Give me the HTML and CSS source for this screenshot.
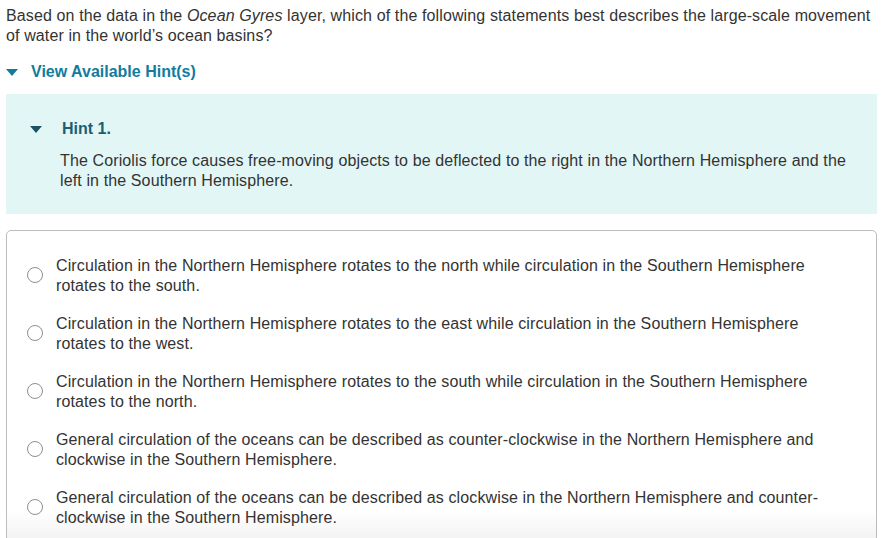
FILE: index.html
```html
<!DOCTYPE html>
<html>
<head>
<meta charset="utf-8">
<link rel="stylesheet" href="styles.css">
</head>
<body>
<p class="question">Based on the data in the <em>Ocean Gyres</em> layer, which of the following statements best describes the large-scale movement of water in the world’s ocean basins?</p>
<div class="hints-toggle"><span class="tri tri-link"></span><span>View Available Hint(s)</span></div>
<div class="hint-box">
  <div class="hint-title"><span class="tri tri-hint"></span><span>Hint 1.</span></div>
  <p class="hint-text">The Coriolis force causes free-moving objects to be deflected to the right in the Northern Hemisphere and the left in the Southern Hemisphere.</p>
</div>
<div class="options">
  <label class="option"><span class="radio"></span><span class="opt-text">Circulation in the Northern Hemisphere rotates to the north while circulation in the Southern Hemisphere rotates to the south.</span></label>
  <label class="option"><span class="radio"></span><span class="opt-text">Circulation in the Northern Hemisphere rotates to the east while circulation in the Southern Hemisphere rotates to the west.</span></label>
  <label class="option"><span class="radio"></span><span class="opt-text">Circulation in the Northern Hemisphere rotates to the south while circulation in the Southern Hemisphere rotates to the north.</span></label>
  <label class="option"><span class="radio"></span><span class="opt-text">General circulation of the oceans can be described as counter-clockwise in the Northern Hemisphere and clockwise in the Southern Hemisphere.</span></label>
  <label class="option"><span class="radio"></span><span class="opt-text">General circulation of the oceans can be described as clockwise in the Northern Hemisphere and counter-clockwise in the Southern Hemisphere.</span></label>
</div>
</body>
</html>
```
FILE: styles.css
```css
html, body {
  margin: 0;
  background: #fff;
}
body {
  padding: 6px 4px 0 6px;
  font-family: "Liberation Sans", Arial, sans-serif;
  font-size: 16px;
  letter-spacing: 0.12px;
  line-height: 20px;
  color: #333;
  overflow: hidden;
}
.question {
  margin: 0;
}
.hints-toggle {
  margin-top: 16px;
  display: flex;
  align-items: center;
  gap: 13px;
  font-weight: bold;
  letter-spacing: 0;
  color: #127c9c;
}
.tri {
  display: inline-block;
  width: 0;
  height: 0;
  border-left: 6px solid transparent;
  border-right: 6px solid transparent;
}
.tri-link {
  border-top: 7px solid #127c9c;
}
.hint-box {
  margin-top: 12px;
  background: #e2f6f6;
  padding: 25px 20px 23px 24px;
}
.hint-title {
  display: flex;
  align-items: center;
  gap: 20px;
  font-weight: bold;
  letter-spacing: 0;
  color: #1b5e73;
}
.tri-hint {
  border-top: 7px solid #1c5467;
}
.hint-text {
  margin: 12px 0 0 30px;
}
.options {
  margin-top: 16px;
  border: 1px solid #bdbdbd;
  border-radius: 5px;
  padding: 25px 20px 30px 20px;
  display: flex;
  flex-direction: column;
  gap: 18px;
  background: linear-gradient(to bottom, #fff 0, #fff 280px, #f2f2f2 310px);
}
.option {
  display: flex;
  align-items: flex-start;
  gap: 13px;
}
.radio {
  flex: none;
  width: 14px;
  height: 14px;
  margin-top: 11px;
  border: 1px solid #8e8e8e;
  border-radius: 50%;
  background: #fff;
}
.opt-text {
  flex: 1;
  padding-right: 30px;
}
```
